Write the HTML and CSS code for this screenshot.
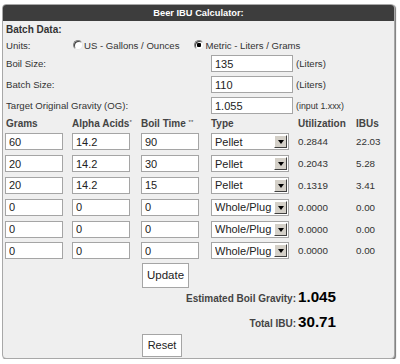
FILE: index.html
```html
<!DOCTYPE html>
<html lang="en">
<head>
    <meta charset="UTF-8">
    <title>Beer IBU Calculator</title>
    <link rel="stylesheet" href="styles.css">
</head>
<body>

    <div class="calc">
        <div class="calc-title">Beer IBU Calculator:</div>
        <div class="calc-body">
            <div class="section">Batch Data:</div>

            <div class="row units">
                <span class="label">Units:</span>
                <div class="options">
                    <label class="opt"><input type="radio" name="units"> US - Gallons / Ounces</label>
                    <label class="opt"><input type="radio" name="units" checked> Metric - Liters / Grams</label>
                </div>
            </div>

            <div class="row field">
                <label class="label" for="boil">Boil Size:</label>
                <div class="entry"><input type="text" id="boil" class="wide" value="135"> <span class="unit">(Liters)</span></div>
            </div>
            <div class="row field">
                <label class="label" for="batch">Batch Size:</label>
                <div class="entry"><input type="text" id="batch" class="wide" value="110"> <span class="unit">(Liters)</span></div>
            </div>
            <div class="row field">
                <label class="label" for="og">Target Original Gravity (OG):</label>
                <div class="entry"><input type="text" id="og" class="wide" value="1.055"> <span class="unit small">(input 1.xxx)</span></div>
            </div>

            <div class="row hop-head">
                <span>Grams</span>
                <span>Alpha Acids<sup>*</sup></span>
                <span>Boil Time <sup>**</sup></span>
                <span>Type</span>
                <span>Utilization</span>
                <span>IBUs</span>
            </div>

            <div id="hops"></div>

            <div class="row btn-row update-row">
                <input type="button" value="Update">
            </div>

            <div class="row result">
                <span class="res-label">Estimated Boil Gravity:</span>
                <span class="res-value">1.045</span>
            </div>
            <div class="row result total">
                <span class="res-label">Total IBU:</span>
                <span class="res-value">30.71</span>
            </div>

            <div class="row btn-row reset-row">
                <input type="button" value="Reset">
            </div>
        </div>
    </div>

    <script>
        const hops = [
            { grams: '60', alpha: '14.2', time: '90', type: 'Pellet', util: '0.2844', ibu: '22.03' },
            { grams: '20', alpha: '14.2', time: '30', type: 'Pellet', util: '0.2043', ibu: '5.28' },
            { grams: '20', alpha: '14.2', time: '15', type: 'Pellet', util: '0.1319', ibu: '3.41' },
            { grams: '0', alpha: '0', time: '0', type: 'Whole/Plug', util: '0.0000', ibu: '0.00' },
            { grams: '0', alpha: '0', time: '0', type: 'Whole/Plug', util: '0.0000', ibu: '0.00' },
            { grams: '0', alpha: '0', time: '0', type: 'Whole/Plug', util: '0.0000', ibu: '0.00' }
        ];

        const hopsDiv = document.getElementById('hops');
        hops.forEach(h => {
            const row = document.createElement('div');
            row.classList.add('row', 'hop');
            row.innerHTML = `
                <input type="text" class="num" value="${h.grams}">
                <input type="text" class="num" value="${h.alpha}">
                <input type="text" class="num" value="${h.time}">
                <div class="select-wrap">
                    <select>
                        <option${h.type === 'Pellet' ? ' selected' : ''}>Pellet</option>
                        <option${h.type === 'Whole/Plug' ? ' selected' : ''}>Whole/Plug</option>
                    </select>
                </div>
                <span class="val">${h.util}</span>
                <span class="val">${h.ibu}</span>`;
            hopsDiv.appendChild(row);
        });
    </script>

</body>
</html>
```

FILE: styles.css
```css
body {
    margin: 0;
    background-color: white;
    font-family: "Liberation Sans", Arial, sans-serif;
    color: #333;
}
.calc {
    margin: 4px 0 0 2px;
    width: 391px;
    border: 1px solid #a8a8a8;
    border-radius: 4px;
    box-shadow: 1px 1px 1px #777;
    background-color: #efefef;
    overflow: hidden;
}
.calc-title {
    height: 16px;
    line-height: 16px;
    background-color: #3d3d3d;
    color: white;
    font-weight: bold;
    font-size: 9.3px;
    text-align: center;
}
.calc-body {
    padding: 0 0 1px 2px;
}
.section {
    height: 16px;
    line-height: 17px;
    font-weight: bold;
    font-size: 10px;
    padding-left: 1px;
}
.row {
    display: grid;
    grid-template-columns: 67px 69px 70px 87px 58px 1fr;
    align-items: center;
    font-size: 9.6px;
}
.label {
    padding-left: 1px;
}
.units {
    height: 16px;
}
.options {
    grid-column: 2 / 7;
    display: flex;
    gap: 14px;
}
.opt {
    display: flex;
    align-items: center;
    gap: 1px;
}
input[type="radio"] {
    appearance: none;
    margin: 0 0 0 1px;
    width: 10px;
    height: 10px;
    border-radius: 50%;
    border: 1px solid;
    border-color: #808080 #e8e8e8 #e8e8e8 #808080;
    background-color: white;
    box-shadow: inset 1px 1px 0 #404040;
}
input[type="radio"]:checked {
    background: radial-gradient(circle, black 0 2px, white 2.5px);
}
.field {
    height: 21px;
}
.field .label {
    grid-column: 1 / 4;
}
.entry {
    grid-column: 4 / 7;
    display: flex;
    align-items: center;
    gap: 3px;
}
input[type="text"] {
    box-sizing: border-box;
    height: 17px;
    margin: 0;
    padding: 0 3px;
    border: 1px solid #a5a5a5;
    background-color: white;
    font-family: inherit;
    font-size: 11px;
    color: #222;
}
input.wide {
    width: 82px;
}
input.num {
    width: 58px;
}
.unit.small {
    font-size: 8.8px;
}
.hop-head {
    height: 15px;
    font-weight: bold;
    font-size: 10px;
    color: #444;
}
.hop-head span:first-child {
    padding-left: 1px;
}
sup {
    font-size: 6px;
    vertical-align: 3px;
    font-weight: normal;
}
.hop {
    height: 21.8px;
}
.select-wrap {
    position: relative;
    width: 78px;
    height: 17px;
}
select {
    appearance: none;
    box-sizing: border-box;
    width: 78px;
    height: 17px;
    margin: 0;
    padding: 0 0 0 3px;
    border: 1px solid #a5a5a5;
    border-radius: 0;
    background-color: white;
    font-family: inherit;
    font-size: 11px;
    color: #222;
}
.select-wrap::after {
    content: "";
    position: absolute;
    top: 2px;
    right: 2px;
    width: 11px;
    height: 11px;
    border: 1px solid;
    border-color: #fff #404040 #404040 #fff;
    background-color: #d4d0c8;
    pointer-events: none;
}
.select-wrap::before {
    content: "";
    position: absolute;
    top: 7px;
    right: 5px;
    border-left: 3.5px solid transparent;
    border-right: 3.5px solid transparent;
    border-top: 4px solid black;
    z-index: 1;
    pointer-events: none;
}
.val {
    font-size: 9.8px;
}
.btn-row input {
    grid-column: 3;
    justify-self: start;
    margin: 0 0 0 1px;
    padding: 0;
    border: 1px solid #a5a5a5;
    background-color: white;
    font-family: inherit;
    color: #222;
    cursor: pointer;
}
.update-row {
    margin-top: 1px;
}
.update-row input {
    width: 47px;
    height: 25px;
    font-size: 11.5px;
}
.reset-row input {
    width: 40px;
    height: 23px;
    font-size: 11px;
}
.result {
    display: grid;
    align-items: baseline;
    height: 20px;
}
.result.total {
    margin: 5px 0 1px;
}
.res-label {
    grid-column: 1 / 5;
    text-align: right;
    padding-right: 2px;
    font-weight: bold;
    font-size: 10px;
    color: #444;
}
.res-value {
    font-weight: bold;
    font-size: 15.2px;
    color: black;
}
```
